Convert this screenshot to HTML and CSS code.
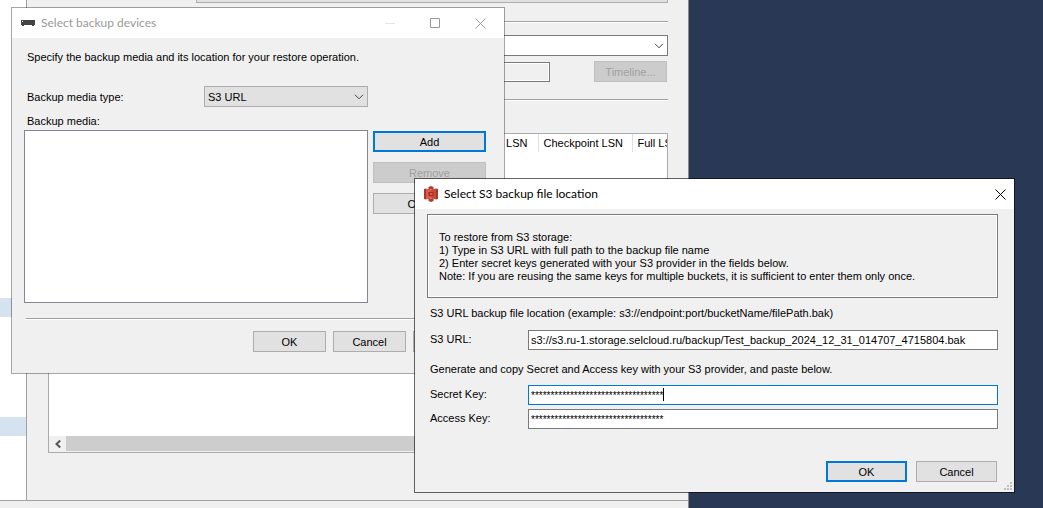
FILE: index.html
```html
<!DOCTYPE html>
<html lang="en">
<head>
<meta charset="utf-8">
<title>Select S3 backup file location</title>
<link rel="stylesheet" href="styles.css">
</head>
<body>
<main class="desktop">

  <section class="window restore" aria-label="Restore database">
    <div class="restore-main">
      <div class="tree">
        <div class="tree-mark first"></div>
        <div class="tree-mark second"></div>
      </div>
      <div class="restore-page">
        <div class="combo source">
          <select aria-label="Source"></select>
        </div>
        <hr class="rule">
        <div class="combo database">
          <select class="light" aria-label="Database"></select>
          <svg class="chevron" viewBox="0 0 10 6" aria-hidden="true"><path d="M1 .8 5 4.8 9 .8"/></svg>
        </div>
        <div class="restore-to">
          <input class="readonly" type="text" readonly aria-label="Restore to">
          <button class="btn timeline" disabled>Timeline...</button>
        </div>
        <hr class="rule second-rule">
        <div class="grid-box">
          <table class="sets">
            <colgroup><col><col class="c-check"><col class="c-full"></colgroup>
            <thead><tr><th class="end">LSN</th><th>Checkpoint LSN</th><th>Full LSN</th></tr></thead>
          </table>
          <div class="scrollbar">
            <button class="scroll-left" aria-label="Scroll left">
              <svg viewBox="0 0 6 8" aria-hidden="true"><path d="M5.2.5 1.5 4l3.7 3.5"/></svg>
            </button>
            <div class="thumb"></div>
          </div>
        </div>
      </div>
    </div>
    <div class="restore-foot"></div>
  </section>

  <section class="window devices" role="dialog" aria-labelledby="devices-title">
    <header class="titlebar">
      <svg class="drive" viewBox="0 0 14 6" aria-hidden="true"><path d="M0 0h14v5h-1v1h-2V5H3v1H1V5H0z" fill="#444"/><path d="M1 1h1v1H1z" fill="#fff"/></svg>
      <h1 class="title" id="devices-title">Select backup devices</h1>
      <div class="caption">
        <button class="cap dim" aria-label="Minimize"><svg viewBox="0 0 11 11"><path d="M0 5.5h10"/></svg></button>
        <button class="cap" aria-label="Maximize"><svg viewBox="0 0 11 11"><path d="M.5.5h9v9h-9z"/></svg></button>
        <button class="cap" aria-label="Close"><svg viewBox="0 0 11 11"><path d="m.5.5 10 10m0-10-10 10"/></svg></button>
      </div>
    </header>
    <div class="devices-body">
      <p class="text">Specify the backup media and its location for your restore operation.</p>
      <div class="media-type">
        <label for="media-type">Backup media type:</label>
        <div class="combo media">
          <select id="media-type"><option>S3 URL</option></select>
          <svg class="chevron" viewBox="0 0 10 6" aria-hidden="true"><path d="M1 .8 5 4.8 9 .8"/></svg>
        </div>
      </div>
      <label class="text media-label" for="media-list">Backup media:</label>
      <div class="media-area">
        <select class="media-list" id="media-list" size="8"></select>
        <div class="media-buttons">
          <button class="btn default">Add</button>
          <button class="btn" disabled>Remove</button>
          <button class="btn">Contents</button>
        </div>
      </div>
      <hr class="rule devices-rule">
      <div class="actions devices-actions">
        <button class="btn">OK</button>
        <button class="btn">Cancel</button>
        <button class="btn" aria-label="Help"></button>
      </div>
    </div>
  </section>

  <section class="window s3" role="dialog" aria-labelledby="s3-title">
    <header class="titlebar">
      <svg class="bucket" viewBox="0 0 14 16" aria-hidden="true">
        <path d="M0 3l2-.5v11L0 13z" fill="#a33a2c"/>
        <path d="M14 3l-2-.5v11l2-.5z" fill="#a33a2c"/>
        <path d="M2 2.500 7 4v8l-5 1.500z" fill="#e0594a"/>
        <path d="M12 2.500 7 4v8l5 1.500z" fill="#c9493b"/>
        <path d="M4.500 1 7 0l2.500 1v3L7 3.500 4.500 4z" fill="#b5382b"/>
        <path d="M4.500 15 7 16l2.500-1v-3L7 12.500 4.500 12z" fill="#b5382b"/>
        <path d="M4.500 6h5v4h-5z" fill="#9c2f22"/>
        <path d="M6 7h2.500v2H6z" fill="#e0594a"/>
      </svg>
      <h1 class="title" id="s3-title">Select S3 backup file location</h1>
      <div class="caption">
        <button class="cap" aria-label="Close"><svg viewBox="0 0 11 11"><path d="m.5.5 10 10m0-10-10 10"/></svg></button>
      </div>
    </header>
    <div class="s3-body">
      <div class="notes">
        <p>To restore from S3 storage:</p>
        <p>1) Type in S3 URL with full path to the backup file name</p>
        <p>2) Enter secret keys generated with your S3 provider in the fields below.</p>
        <p>Note: If you are reusing the same keys for multiple buckets, it is sufficient to enter them only once.</p>
      </div>
      <p class="text location">S3 URL backup file location (example: s3://endpoint:port/bucketName/filePath.bak)</p>
      <div class="field">
        <label for="url">S3 URL:</label>
        <div class="entry"><input id="url" type="text" value="s3://s3.ru-1.storage.selcloud.ru/backup/Test_backup_2024_12_31_014707_4715804.bak"></div>
      </div>
      <p class="text generate">Generate and copy Secret and Access key with your S3 provider, and paste below.</p>
      <div class="keys">
        <div class="field">
          <label for="secret">Secret Key:</label>
          <div class="entry"><input class="masked active" id="secret" type="text" value="**********************************"><span class="caret"></span></div>
        </div>
        <div class="field">
          <label for="access">Access Key:</label>
          <div class="entry"><input class="masked" id="access" type="text" value="**********************************"></div>
        </div>
      </div>
      <div class="actions s3-actions">
        <button class="btn default">OK</button>
        <button class="btn">Cancel</button>
      </div>
    </div>
    <svg class="grip" viewBox="0 0 8 8" aria-hidden="true"><path d="M6 0h2v2H6zM3 3h2v2H3zM6 3h2v2H6zM0 6h2v2H0zM3 6h2v2H3zM6 6h2v2H6z"/></svg>
  </section>

</main>
</body>
</html>
```

FILE: styles.css
```css
* { box-sizing: border-box; }

body {
  margin: 0;
  background: #293955;
  color: #000;
  font: 11px/14px "Liberation Sans", Arial, sans-serif;
}

p, h1 { margin: 0; }

button, input, select {
  margin: 0;
  padding: 0;
  border-radius: 0;
  color: inherit;
  font: inherit;
  outline: 0;
  appearance: none;
}

.desktop {
  position: relative;
  min-height: 100vh;
  overflow: hidden;
}

.window { position: absolute; background: #f0f0f0; }

/* Shared controls */
.btn {
  height: 21px;
  border: 1px solid #adadad;
  background: #e1e1e1;
}
.btn.default { border: 2px solid #0078d7; }
.btn:disabled { border-color: #bfbfbf; background: #ccc; color: #a0a0a0; }

.rule {
  height: 2px;
  margin: 0;
  border: 0;
  border-top: 1px solid #a0a0a0;
  background: #fff;
}

.combo { position: relative; }
.combo select {
  display: block;
  width: 100%;
  height: 21px;
  padding-left: 3px;
  border: 1px solid #adadad;
  background: #e1e1e1;
}
.combo select.light { border-color: #7a7a7a; background: #fff; }
.chevron {
  position: absolute;
  right: 4px;
  top: 8px;
  width: 10px;
  height: 6px;
  fill: none;
  stroke: #444;
}

.titlebar { display: flex; align-items: center; height: 30px; background: #fff; }
.title { flex: 1; font: 12px/16px Lato, "Open Sans", sans-serif; }
.caption { display: flex; }
.cap { width: 45px; height: 30px; border: 0; background: none; }
.cap svg {
  display: block;
  width: 11px;
  height: 11px;
  margin: 0 auto;
  fill: none;
  stroke: currentColor;
}

.actions { display: flex; }
.text { display: block; padding-left: 3px; }

/* Restore window */
.restore {
  top: -18px;
  right: 354px;
  bottom: 0;
  left: 0;
  display: flex;
  flex-direction: column;
  border-right: 1px solid #8a8a8a;
}
.restore-main { display: flex; flex: 1; min-height: 0; }
.restore-foot { height: 8px; border-top: 1px solid #a0a0a0; }
.tree { width: 27px; padding-top: 316px; border-right: 1px solid #a0a0a0; background: #fff; }
.tree-mark { height: 19px; background: #d5e2f0; }
.tree-mark.second { margin-top: 100px; }
.restore-page {
  display: flex;
  flex: 1;
  flex-direction: column;
  min-width: 0;
  padding: 0 20px 47px 21px;
}
.source { margin: 0 0 18px 148px; }
.database { margin: 12px 0 5px 148px; }
.restore-to { display: flex; justify-content: flex-end; align-items: flex-end; gap: 44px; margin-right: 1px; }
.readonly {
  width: 354px;
  height: 20px;
  border: 1px solid #7a7a7a;
  background: #f0f0f0;
  box-shadow: inset 0 0 0 1px #fff;
}
.timeline { width: 73px; }
.second-rule { margin: 17px 0 32px; }
.grid-box {
  display: flex;
  flex: 1;
  flex-direction: column;
  justify-content: space-between;
  border: 1px solid #a9abb3;
  background: #fff;
}
.sets { width: 100%; border-collapse: collapse; table-layout: fixed; }
.sets th {
  height: 18px;
  padding: 0 0 0 5px;
  overflow: hidden;
  border-right: 1px solid #e0e0e0;
  font-weight: 400;
  text-align: left;
  white-space: nowrap;
}
.sets th.end { padding-right: 10px; text-align: right; }
.sets th:last-child { border-right: 0; }
.c-check { width: 94px; }
.c-full { width: 35px; }
.scrollbar { display: flex; height: 16px; padding-bottom: 1px; background: #f0f0f0; }
.scroll-left { width: 17px; border: 0; background: #f0f0f0; }
.scroll-left svg { display: block; width: 6px; height: 8px; margin: 0 auto; fill: none; stroke: #555; stroke-width: 2; }
.thumb { flex: 1; background: #cdcdcd; }

/* Backup devices dialog */
.devices {
  top: 7px;
  left: 11px;
  width: 494px;
  border: 1px solid rgba(0, 0, 0, .35);
  background-clip: padding-box;
}
.devices .titlebar { padding: 0 1px 0 9px; color: #999; }
.devices .cap.dim { color: #e5e5e5; }
.drive { width: 14px; height: 6px; margin-right: 6px; }
.devices-body { padding: 12px 18px 21px 12px; }
.media-type { display: flex; align-items: center; margin: 22px 0 7px; padding-left: 3px; }
.media-type label { width: 177px; }
.media { width: 164px; }
.media-label { margin-bottom: 2px; }
.media-area { display: flex; gap: 5px; }
.media-list { flex: 1; height: 173px; border: 1px solid #828790; background: #fff; }
.media-buttons { display: flex; flex-direction: column; gap: 10px; width: 113px; padding-top: 1px; }
.devices-rule { margin: 15px 0 11px 2px; }
.devices-actions { justify-content: flex-end; gap: 7px; }
.devices-actions .btn { width: 73px; }

/* S3 location dialog */
.s3 {
  top: 178px;
  right: 28px;
  left: 414px;
  border: 1px solid rgba(0, 0, 0, .6);
  background-clip: padding-box;
}
.s3 .titlebar { padding-left: 9px; }
.s3 .cap { width: 28px; }
.bucket { width: 14px; height: 16px; margin-right: 6px; }
.s3-body { padding: 5px 16px 10px 12px; }
.notes {
  padding: 16px 11px 14px;
  border: 1px solid #7a7a7a;
  box-shadow: inset 0 0 0 1px #fff;
  line-height: 13px;
}
.location { margin: 8px 0 10px; }
.generate { margin: 12px 0 9px; }
.field { display: flex; padding-left: 3px; }
.field label { width: 98px; padding-top: 2px; }
.entry { position: relative; flex: 1; }
.entry input {
  display: block;
  width: 100%;
  height: 20px;
  padding-left: 2px;
  border: 1px solid #7a7a7a;
  background: #fff;
}
.entry input.masked { font-size: 10px; }
.entry input.active { border-color: #0078d7; }
.caret { position: absolute; top: 3px; left: 135px; width: 1px; height: 13px; background: #000; }
.keys { display: grid; gap: 4px; margin-bottom: 32px; }
.s3-actions { justify-content: flex-end; gap: 9px; margin-right: 1px; }
.s3-actions .btn { width: 81px; }
.grip { position: absolute; right: 2px; bottom: 2px; width: 8px; height: 8px; fill: #bfbfbf; }
```
